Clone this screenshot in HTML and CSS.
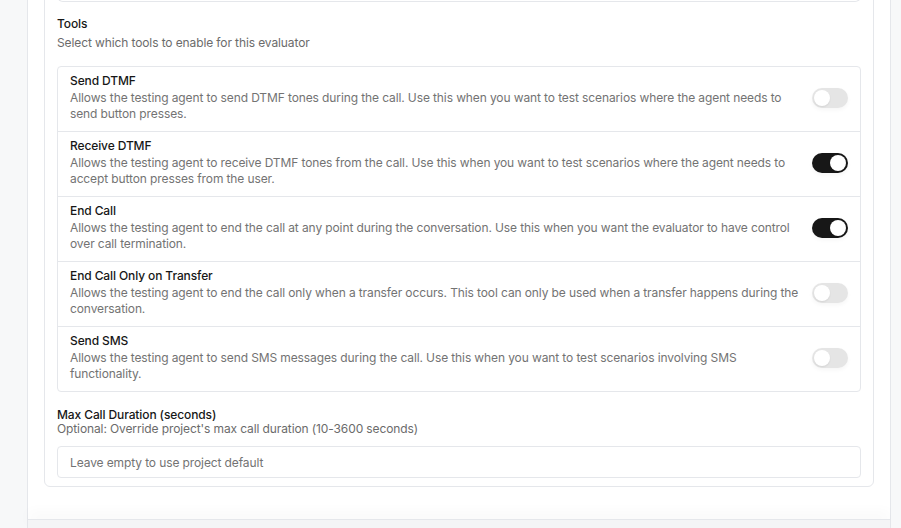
FILE: index.html
```html
<!DOCTYPE html>
<html lang="en">
<head>
<meta charset="utf-8">
<title>Evaluator tools</title>
<link rel="stylesheet" href="styles.css">
</head>
<body>
<div class="page">
  <div class="side-left"></div>
  <div class="panel">
    <div class="scroll">
      <div class="card">
        <div class="prev-input"></div>

        <div class="section-head">
          <div class="label">Tools</div>
          <div class="hint hint-tools">Select which tools to enable for this evaluator</div>
        </div>

        <div class="tool-list">
          <div class="tool-row">
            <div class="tool-text">
              <div class="tool-title">Send DTMF</div>
              <div class="tool-desc">Allows the testing agent to send DTMF tones during the call. Use this when you want to test scenarios where the agent needs to send button presses.</div>
            </div>
            <div class="switch"><span class="knob"></span></div>
          </div>
          <div class="tool-row">
            <div class="tool-text">
              <div class="tool-title">Receive DTMF</div>
              <div class="tool-desc">Allows the testing agent to receive DTMF tones from the call. Use this when you want to test scenarios where the agent needs to accept button presses from the user.</div>
            </div>
            <div class="switch on"><span class="knob"></span></div>
          </div>
          <div class="tool-row">
            <div class="tool-text">
              <div class="tool-title">End Call</div>
              <div class="tool-desc">Allows the testing agent to end the call at any point during the conversation. Use this when you want the evaluator to have control over call termination.</div>
            </div>
            <div class="switch on"><span class="knob"></span></div>
          </div>
          <div class="tool-row">
            <div class="tool-text">
              <div class="tool-title">End Call Only on Transfer</div>
              <div class="tool-desc">Allows the testing agent to end the call only when a transfer occurs. This tool can only be used when a transfer happens during the conversation.</div>
            </div>
            <div class="switch"><span class="knob"></span></div>
          </div>
          <div class="tool-row">
            <div class="tool-text">
              <div class="tool-title">Send SMS</div>
              <div class="tool-desc">Allows the testing agent to send SMS messages during the call. Use this when you want to test scenarios involving SMS functionality.</div>
            </div>
            <div class="switch"><span class="knob"></span></div>
          </div>
        </div>

        <div class="section-head duration">
          <div class="label">Max Call Duration (seconds)</div>
          <div class="hint hint-duration">Optional: Override project's max call duration (10-3600 seconds)</div>
        </div>
        <input class="text-input" type="text" placeholder="Leave empty to use project default">
      </div>
    </div>
    <div class="footer"></div>
  </div>
  <div class="side-right"></div>
</div>
</body>
</html>
```

FILE: styles.css
```css
* { box-sizing: border-box; }

html, body {
  margin: 0;
  padding: 0;
  height: 100%;
  overflow: hidden;
}

body {
  font-family: Inter, "Noto Sans", "Liberation Sans", sans-serif;
  font-size: 12px;
  letter-spacing: -0.11px;
  color: #171717;
  background: #f7f8f9;
}

.page {
  display: flex;
  height: 528px;
}

.side-left {
  width: 27px;
  flex: none;
  background: #f7f8f9;
}

.side-right {
  flex: 1;
  background: #f7f8f9;
}

.panel {
  width: 864px;
  flex: none;
  display: flex;
  flex-direction: column;
  background: #ffffff;
  border-left: 1px solid #e5e7eb;
  border-right: 1px solid #e5e7eb;
}

.scroll {
  flex: 1;
  min-height: 0;
  overflow: hidden;
  padding: 0 16px;
}

.card {
  margin-top: -41px;
  border: 1px solid #e5e7eb;
  border-radius: 6px;
  padding: 0 12px 8px;
}

.prev-input {
  height: 42px;
  border: 1px solid #e5e7eb;
  border-top: none;
  border-radius: 0 0 6px 6px;
}

.section-head {
  margin-top: 14px;
}

.label {
  font-size: 12px;
  line-height: 16px;
  font-weight: 500;
  color: #171717;
}

.hint {
  font-size: 12px;
  line-height: 14px;
  color: #6b6b6b;
}

.hint-tools { margin-top: 4px; }

.tool-list {
  margin-top: 16px;
  border: 1px solid #e5e7eb;
  border-radius: 4px;
}

.tool-row {
  display: flex;
  align-items: center;
  gap: 12px;
  height: 65px;
  padding: 6px 12px 8px;
  border-top: 1px solid #e5e7eb;
}

.tool-row:first-child {
  border-top: none;
  height: 64px;
}

.tool-text {
  flex: 1;
  min-width: 0;
  align-self: flex-start;
}

.tool-title {
  line-height: 16px;
  font-weight: 500;
  color: #171717;
}

.tool-desc {
  margin-top: 1px;
  line-height: 16px;
  color: #737373;
}

.switch {
  flex: none;
  width: 36px;
  height: 20px;
  border-radius: 10px;
  background: #e5e5e5;
  padding: 2px;
  display: flex;
  justify-content: flex-start;
  box-shadow: 0 2px 4px rgba(0, 0, 0, 0.04);
}

.switch.on {
  background: #171717;
  justify-content: flex-end;
}

.knob {
  width: 16px;
  height: 16px;
  border-radius: 50%;
  background: #ffffff;
  box-shadow: 0 1px 2px rgba(0, 0, 0, 0.08);
}

.duration {
  margin-top: 15px;
}

.hint-duration {
  margin-top: -1px;
}

.text-input {
  display: block;
  width: 100%;
  height: 32px;
  margin-top: 10px;
  border: 1px solid #e5e7eb;
  border-radius: 4px;
  padding: 0 12px;
  font-family: inherit;
  font-size: 12px;
  letter-spacing: -0.11px;
  color: #171717;
  background: #ffffff;
  outline: none;
}

.text-input::placeholder {
  color: #737373;
}

.footer {
  flex: none;
  height: 9px;
  background: #f4f5f6;
  border-top: 1px solid #e5e7eb;
  box-shadow: 0 -6px 14px rgba(0, 0, 0, 0.035);
}
```
